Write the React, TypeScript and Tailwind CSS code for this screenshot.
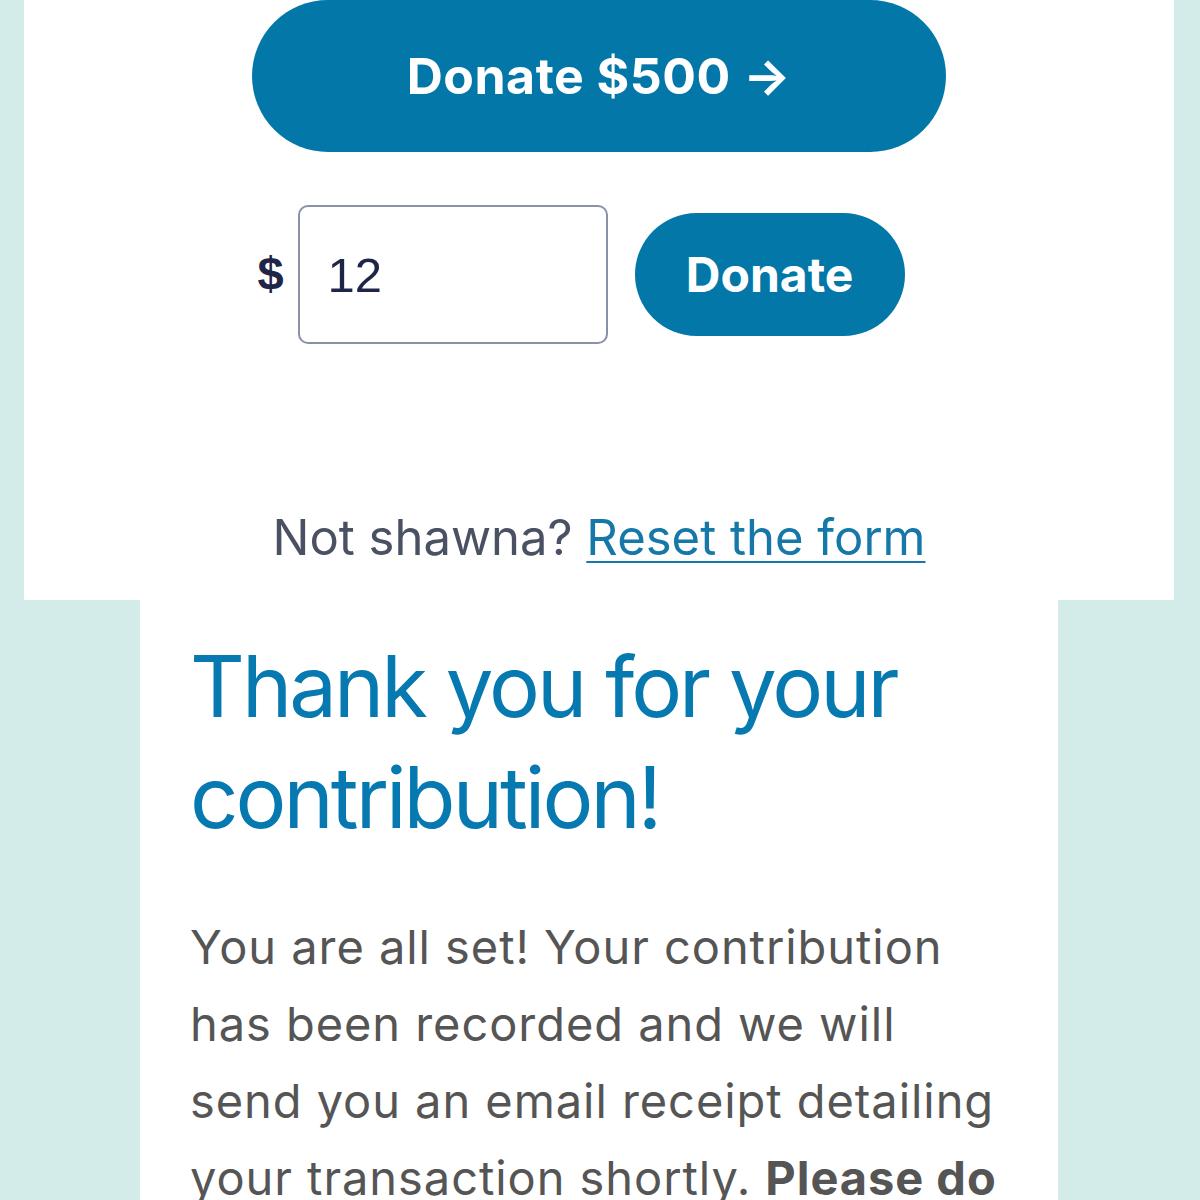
import React, { useState } from 'react'

export default function App() {
  const [amount, setAmount] = useState('12')

  return (
    <div className="min-h-[1200px] bg-[#d3ece9] font-['Inter',sans-serif] overflow-hidden">
      <div className="ml-[24px] w-[1150px] bg-white h-[600px] flex flex-col items-center">
        <button className="w-[694px] h-[152px] rounded-full bg-[#0477a9] text-white text-[50px] font-bold tracking-[0.01em]">
          Donate $500 →
        </button>

        <div className="mt-[53px] flex items-center pr-[36px]">
          <span className="font-['Liberation_Sans',sans-serif] font-bold text-[47px] text-[#1f2547] mr-[14px]">$</span>
          <input
            value={amount}
            onChange={e => setAmount(e.target.value)}
            className="w-[310px] h-[139px] border-2 border-[#8a90a8] rounded-[10px] pl-[28px] text-[49px] text-[#1f2547] font-['Liberation_Sans',sans-serif] outline-none"
          />
          <button className="ml-[27px] w-[270px] h-[123px] rounded-full bg-[#0477a9] text-white text-[48px] font-bold">
            Donate
          </button>
        </div>

        <p className="mt-[157px] text-[49px] text-[#4a5163]">
          Not shawna? <a href="#" className="text-[#1578a8] underline underline-offset-[6px] decoration-2">Reset the form</a>
        </p>
      </div>

      <div className="ml-[140px] w-[918px] bg-white pt-[31px] pl-[50px] pr-[20px] pb-10">
        <h1 className="text-[85px] leading-[111px] tracking-[-0.035em] text-[#0779b1]">Thank you for your contribution!</h1>
        <p className="mt-[55px] text-[47px] leading-[77px] tracking-[0.02em] text-[#555555] whitespace-nowrap">
          You are all set! Your contribution<br />
          has been recorded and we will<br />
          send you an email receipt detailing<br />
          your transaction shortly. <b>Please do</b><br />
          not reply to this email.
        </p>
      </div>
    </div>
  )
}
